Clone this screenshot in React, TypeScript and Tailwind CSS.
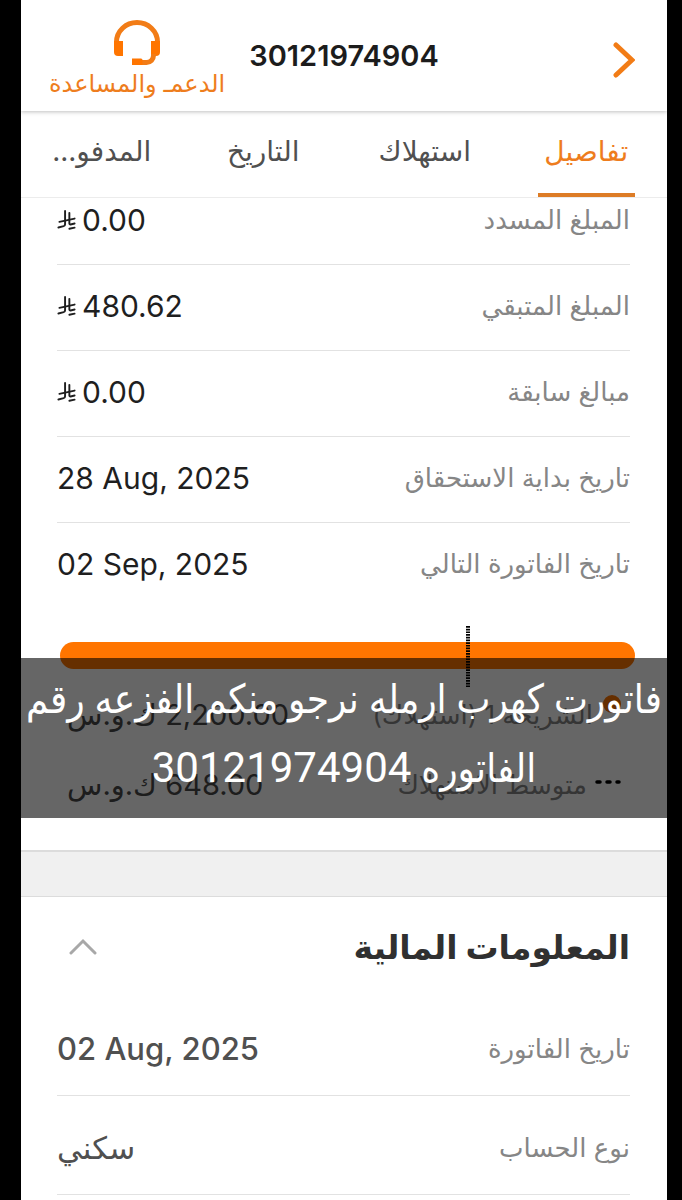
import React, { useState } from 'react';
import { SaudiRiyal } from 'lucide-react';

interface Entry {
  label: string;
  value: string;
  currency?: boolean;
}

const TABS = ['تفاصيل', 'استهلاك', 'التاريخ', 'المدفو...'];

const BILL_ROWS: Entry[] = [
  { label: 'المبلغ المسدد', value: '0.00', currency: true },
  { label: 'المبلغ المتبقي', value: '480.62', currency: true },
  { label: 'مبالغ سابقة', value: '0.00', currency: true },
  { label: 'تاريخ بداية الاستحقاق', value: '28 Aug, 2025' },
  { label: 'تاريخ الفاتورة التالي', value: '02 Sep, 2025' },
];

const FINANCIAL_ROWS: Entry[] = [
  { label: 'تاريخ الفاتورة', value: '02 Aug, 2025' },
  { label: 'نوع الحساب', value: 'سكني' },
];

const HeadsetIcon = () => (
  <svg viewBox="0 0 46 46" className="h-[46px] w-[46px]" fill="none" aria-hidden="true">
    <path d="M2.5 24V22a20.5 19.5 0 0 1 41 0v2" stroke="#f27c16" strokeWidth="5" />
    <path d="M0 21h9v15H4a4 4 0 0 1-4-4z" fill="#ff7500" />
    <path d="M46 21h-9v15h5a4 4 0 0 0 4-4z" fill="#ff7500" />
    <path d="M39.5 34v1.5a7 7 0 0 1-7 7H27" stroke="#f27c16" strokeWidth="5" />
    <path d="M18 38.5h9a1.5 1.5 0 0 1 1.5 1.5v5H18z" fill="#ff7500" />
  </svg>
);

const Header = () => (
  <header className="relative z-10 grid h-[111px] grid-cols-[1fr_auto_1fr] items-center bg-white shadow-[0_1px_4px_rgba(0,0,0,0.25)]">
    <button type="button" aria-label="رجوع" className="ms-8 justify-self-start pt-2">
      <svg viewBox="0 0 22 36" className="h-9 w-[22px]" fill="none" aria-hidden="true">
        <path d="M3 3l16 15L3 33" stroke="#f27c16" strokeWidth="5" strokeLinecap="round" />
      </svg>
    </button>
    <h1 className="text-[29px] leading-9 font-semibold text-[#1c1c1c]">30121974904</h1>
    <button type="button" className="me-7 flex flex-col items-center gap-1 justify-self-end pt-1.5 text-[24px] leading-7 whitespace-nowrap text-[#ee7d1d]">
      <HeadsetIcon />
      الدعمـ والمساعدة
    </button>
  </header>
);

const Tabs = () => {
  const [active, setActive] = useState(0);

  return (
    <div role="tablist" className="grid h-[87px] grid-cols-4 border-b border-[#ececec]">
      {TABS.map((tab, i) => (
        <button
          key={tab}
          type="button"
          role="tab"
          aria-selected={active === i}
          onClick={() => setActive(i)}
          className={`flex flex-col items-center justify-between pt-6 text-[28px] leading-8 ${active === i ? 'text-[#ee7d1d]' : 'text-[#505050]'}`}
        >
          {tab}
          <span className={`h-1 w-3/5 ${active === i ? 'bg-[#dd7c26]' : 'bg-transparent'}`} />
        </button>
      ))}
    </div>
  );
};

const BillRow = ({ label, value, currency }: Entry) => (
  <div className="flex items-center justify-between border-b border-[#e2e2e2] pt-[27px] pb-[30px] leading-7 first:pt-2 last:border-0">
    <dt className="text-[26px] text-[#868686]">{label}</dt>
    <dd dir="ltr" className="flex items-center gap-1.5 text-[30px] text-[#1f1f1f]">
      {currency && <SaudiRiyal viewBox="2 1 19 21" className="h-5 w-[19px]" aria-label="ريال" />}
      {value}
    </dd>
  </div>
);

const Consumption = () => (
  <section className="relative h-[242px] pt-[34px]">
    <div className="ms-8 me-[39px] h-[27px] rounded-full bg-[#ff7500]" />
    <dl className="px-[46px] pt-[26px] leading-10">
      <div className="flex items-center justify-between">
        <dt className="flex items-center gap-2.5 text-[26px] text-[#868686]">
          <span className="size-[18px] self-start rounded-full bg-[#ff7500]" />
          الشريحة 1 (استهلاك)
        </dt>
        <dd className="text-[29px] text-[#4a4a4a]">2,200.00 ك.و.س</dd>
      </div>
      <div className="flex items-center justify-between pt-[30px]">
        <dt className="flex items-center gap-2 text-[26px] text-[#868686]">
          <span className="w-[26px]" />
          متوسط الاستهلاك
        </dt>
        <dd className="text-[29px] text-[#4a4a4a]">648.00 ك.و.س</dd>
      </div>
    </dl>
    <p className="absolute inset-x-0 top-[50px] bg-black/60 pt-2 pb-[15px] text-center font-['Roboto','DejaVu_Sans_Condensed','DejaVu_Sans',sans-serif] text-[40px] leading-[68px] text-white">
      فاتورت كهرب ارمله نرجو منكم الفزعه رقم الفاتوره <span className="text-[42px]">30121974904</span>
    </p>
    {/* Average consumption marker and its legend key, both kept above the caption */}
    <svg viewBox="0 0 4 61" className="absolute top-[18px] right-[197px] h-[61px] w-1" aria-hidden="true">
      <path d="M2 0v61" stroke="#000" strokeWidth="4" strokeDasharray="1.7 1" />
    </svg>
    <svg viewBox="0 0 26 4" className="absolute top-[172px] right-[46px] h-1 w-[26px]" aria-hidden="true">
      <path d="M2 2h3M12 2h3M22 2h2" stroke="#000" strokeWidth="3.5" strokeLinecap="round" />
    </svg>
  </section>
);

const Financial = () => {
  const [open, setOpen] = useState(true);

  return (
    <section className="ps-[37px] pe-9">
      <button
        type="button"
        aria-expanded={open}
        onClick={() => setOpen(!open)}
        className="flex w-full items-center justify-between py-[30px] pe-3"
      >
        <h2 className="text-[33px] leading-10 font-bold text-[#303030]">المعلومات المالية</h2>
        <svg viewBox="0 0 28 18" className="h-[18px] w-7" fill="none" aria-hidden="true">
          <path d="M2 15L14 3l12 12" stroke="#a8a8a8" strokeWidth="3" strokeLinecap="round" />
        </svg>
      </button>
      {open && (
        <dl>
          {FINANCIAL_ROWS.map((row) => (
            <div key={row.label} className="flex items-center justify-between border-b border-[#e2e2e2] pt-9 pb-[30px] leading-8">
              <dt className="text-[26px] text-[#868686]">{row.label}</dt>
              <dd dir="auto" className="text-[31px] font-medium text-[#505050]">{row.value}</dd>
            </div>
          ))}
        </dl>
      )}
    </section>
  );
};

export default function App() {
  return (
    <div className="min-h-screen bg-black ps-[15px] pe-[21px] font-['Inter','DejaVu_Sans',sans-serif]" dir="rtl">
      <main className="min-h-screen bg-white">
        <Header />
        <Tabs />
        <dl className="ps-[37px] pe-9">
          {BILL_ROWS.map((row) => (
            <BillRow key={row.label} {...row} />
          ))}
        </dl>
        <Consumption />
        <div className="h-[47px] border-t-2 border-b border-[#dcdcdc] bg-[#f0f0f0]" />
        <Financial />
      </main>
    </div>
  );
}
